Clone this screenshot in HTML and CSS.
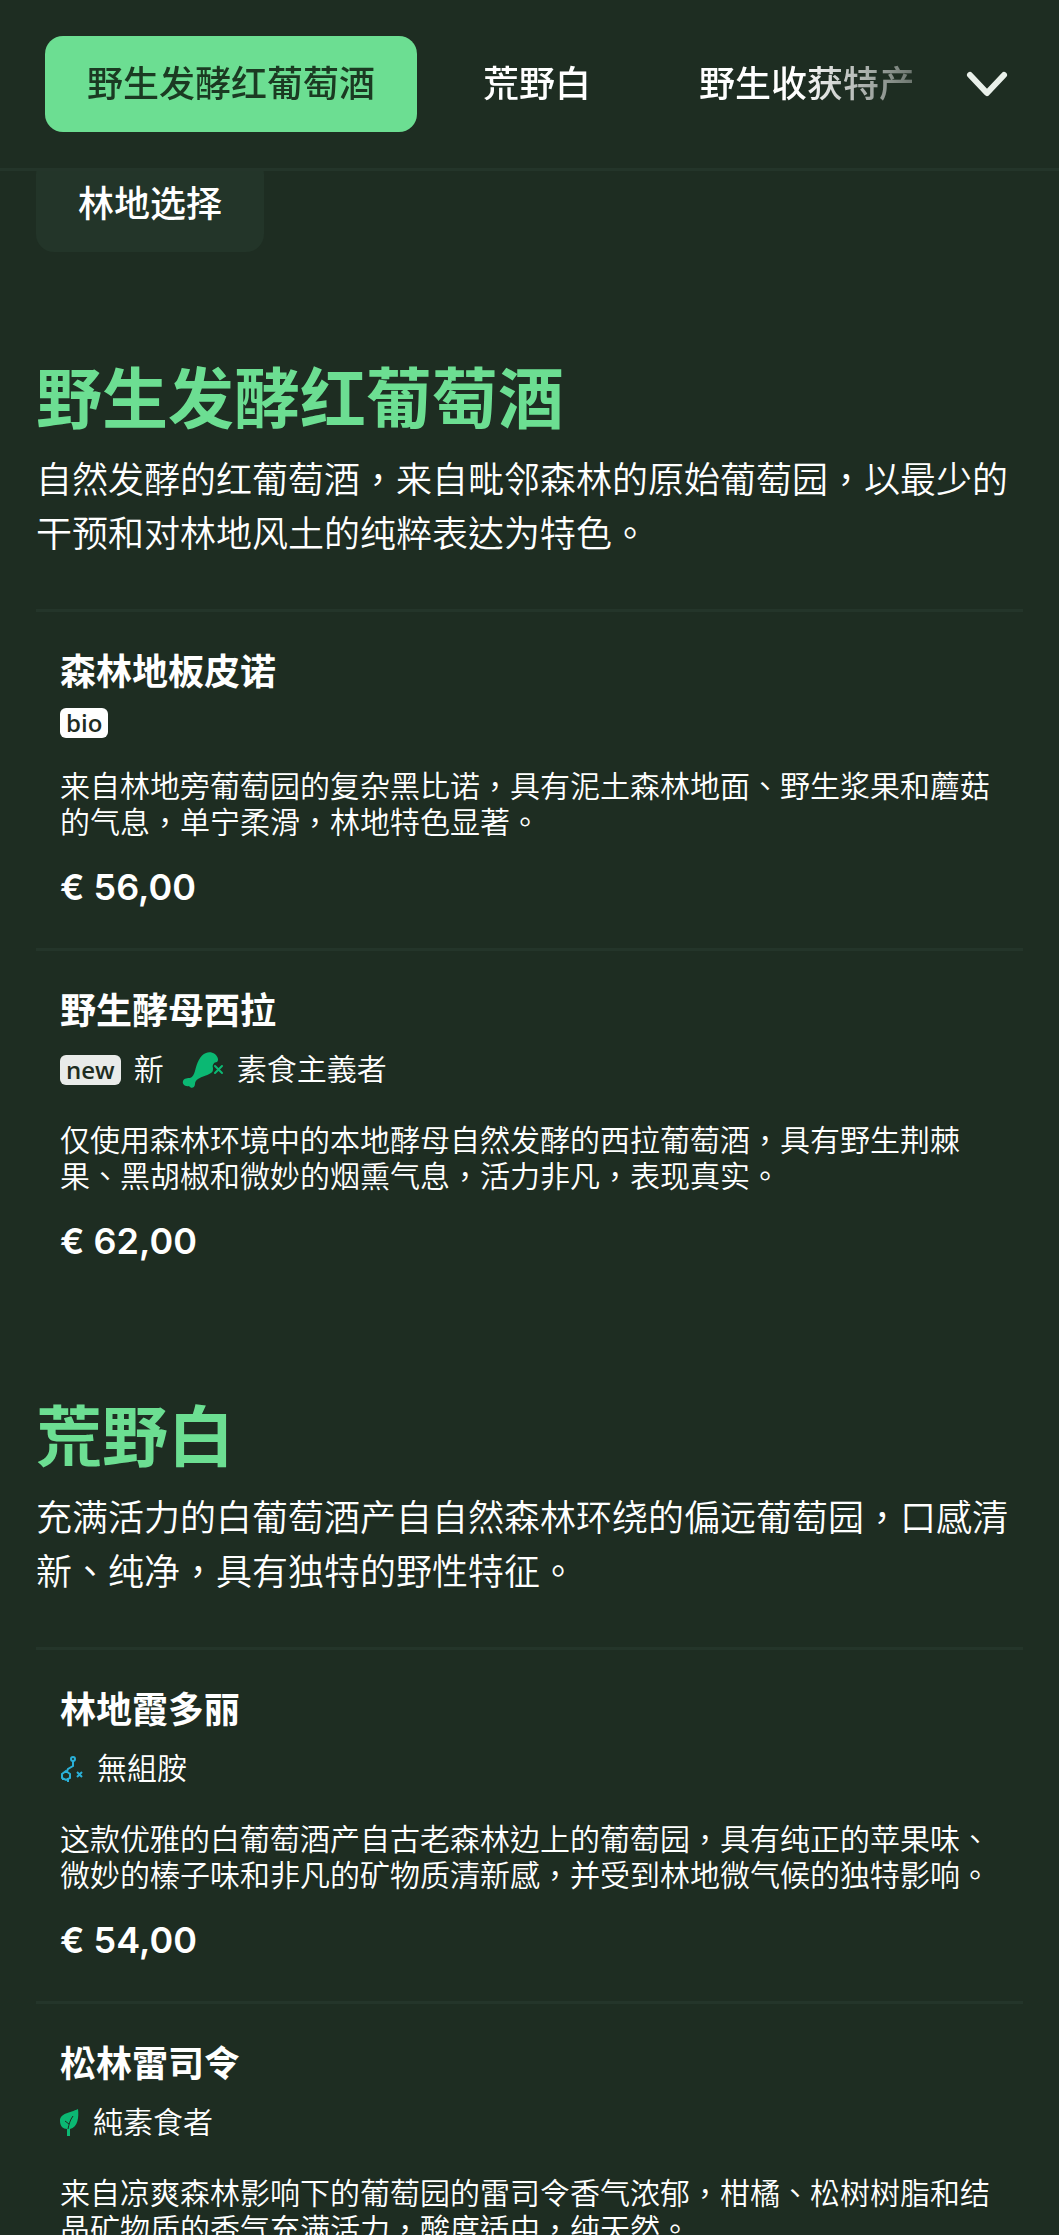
FILE: index.html
```html
<!DOCTYPE html>
<html lang="zh-Hant">
<head>
    <meta charset="UTF-8">
    <meta name="viewport" content="width=device-width, initial-scale=1.0">
    <title>野生发酵红葡萄酒</title>
    <link rel="stylesheet" href="styles.css">
</head>
<body>
    <header class="topbar">
        <nav class="tabs">
            <a class="tab active" href="#red">野生发酵红葡萄酒</a>
            <a class="tab" href="#white">荒野白</a>
            <a class="tab" href="#special">野生收获特产</a>
        </nav>
        <button class="toggle" type="button" aria-label="菜单">
            <svg width="42" height="26" viewBox="0 0 42 26" fill="none" stroke="#e9f0ea" stroke-width="6" stroke-linecap="round" stroke-linejoin="round">
                <path d="M4 4l17 18L38 4"/>
            </svg>
        </button>
    </header>

    <main class="menu">
        <a class="chip" href="#forest">林地选择</a>

        <section class="category" id="red">
            <h2 class="category-title">野生发酵红葡萄酒</h2>
            <p class="category-text">自然发酵的红葡萄酒，来自毗邻森林的原始葡萄园，以最少的干预和对林地风土的纯粹表达为特色。</p>

            <article class="item">
                <h3 class="item-title">森林地板皮诺</h3>
                <div class="labels">
                    <span class="badge bio">bio</span>
                </div>
                <p class="item-text">来自林地旁葡萄园的复杂黑比诺，具有泥土森林地面、野生浆果和蘑菇的气息，单宁柔滑，林地特色显著。</p>
                <p class="price">€ 56,00</p>
            </article>

            <article class="item">
                <h3 class="item-title">野生酵母西拉</h3>
                <div class="labels">
                    <span class="label"><span class="badge">new</span>新</span>
                    <span class="label">
                        <svg width="42" height="38" viewBox="0 0 42 38">
                            <path fill="#0bb873" d="M24 2C29 0 35 3 36 8c0 1 0 2-1 3-3 0-5 3-4 6 0 2 0 4-2 5-4 3-9 3-13 6-2 1-3 3-3 5 0 4-4 5-6 2-4 1-7-2-6-5 1-3 5-3 7-3 3-1 4-4 5-7 2-8 5-16 11-18z"/>
                            <path stroke="#0bb873" stroke-width="2" stroke-linecap="round" d="M33 15l7 7M40 15l-7 7"/>
                        </svg>
                        素食主義者
                    </span>
                </div>
                <p class="item-text">仅使用森林环境中的本地酵母自然发酵的西拉葡萄酒，具有野生荆棘果、黑胡椒和微妙的烟熏气息，活力非凡，表现真实。</p>
                <p class="price">€ 62,00</p>
            </article>
        </section>

        <section class="category" id="white">
            <h2 class="category-title">荒野白</h2>
            <p class="category-text">充满活力的白葡萄酒产自自然森林环绕的偏远葡萄园，口感清新、纯净，具有独特的野性特征。</p>

            <article class="item">
                <h3 class="item-title">林地霞多丽</h3>
                <div class="labels">
                    <span class="label">
                        <svg width="24" height="26" viewBox="0 0 24 26" fill="none" stroke="#2ab0d8" stroke-width="2">
                            <circle cx="13" cy="3" r="2"/>
                            <path d="M13 5v5l-5 3-1 2"/>
                            <path d="M6 15l4 3v4l-4 2-4-2v-4z"/>
                            <path d="M3 22v2M8 22v4"/>
                            <path d="M17 16l5 5M22 16l-5 5"/>
                        </svg>
                        無組胺
                    </span>
                </div>
                <p class="item-text">这款优雅的白葡萄酒产自古老森林边上的葡萄园，具有纯正的苹果味、微妙的榛子味和非凡的矿物质清新感，并受到林地微气候的独特影响。</p>
                <p class="price">€ 54,00</p>
            </article>

            <article class="item">
                <h3 class="item-title">松林雷司令</h3>
                <div class="labels">
                    <span class="label">
                        <svg width="20" height="28" viewBox="0 0 20 28">
                            <path fill="#0bb873" d="M18 0c1 8 0 18-8 20V27H7v-7C3 20 0 17 0 12 0 4 10 4 18 0z"/>
                            <path stroke="#1f2d22" stroke-width="1" fill="none" d="M13 7C10 11 9 15 8 20M9 15l-4-3"/>
                        </svg>
                        純素食者
                    </span>
                </div>
                <p class="item-text">来自凉爽森林影响下的葡萄园的雷司令香气浓郁，柑橘、松树树脂和结晶矿物质的香气充满活力，酸度适中，纯天然。</p>
            </article>
        </section>
    </main>
</body>
</html>
```
FILE: styles.css
```css
* {
    box-sizing: border-box;
}

body {
    margin: 0;
    background-color: #1e2d22;
    color: #fff;
    font-family: Inter, "Noto Sans CJK TC", sans-serif;
    font-size: 36px;
    font-weight: 350;
    line-height: 54px;
}

h2, h3, p {
    margin: 0;
}

a {
    color: inherit;
    text-decoration: none;
}

.topbar {
    position: fixed;
    top: 0;
    left: 0;
    right: 0;
    z-index: 1;
    display: flex;
    align-items: center;
    padding: 36px 51px 36px 45px;
    background-color: #1e2d22;
    border-bottom: 3px solid #24352a;
}

.tabs {
    flex: 1;
    display: flex;
    gap: 24px;
    overflow: hidden;
    -webkit-mask-image: linear-gradient(to right, #000 calc(100% - 110px), transparent calc(100% + 60px));
    mask-image: linear-gradient(to right, #000 calc(100% - 110px), transparent calc(100% + 60px));
}

.tab,
.chip {
    flex-shrink: 0;
    padding: 21px 42px;
    border-radius: 18px;
    font-weight: 500;
}

.tab.active {
    background-color: #6cde92;
    color: #1b3a22;
}

.toggle {
    display: flex;
    justify-content: flex-end;
    width: 96px;
    padding: 0;
    border: none;
    background: none;
    cursor: pointer;
}

.menu {
    padding: 156px 36px 36px;
}

.chip {
    display: inline-block;
    background-color: #233529;
    margin-bottom: 12px;
    vertical-align: top;
}

.category {
    padding-top: 96px;
}

.category-title {
    margin-bottom: 15px;
    color: #6cde92;
    font-size: 66px;
    font-weight: 600;
    line-height: 78px;
}

.category-text {
    margin-bottom: 48px;
}

.item {
    padding: 33px 24px;
    border-top: 3px solid #24352a;
}

.item-title {
    margin-bottom: 9px;
    font-size: 36px;
    font-weight: 600;
}

.labels {
    display: flex;
    align-items: center;
    gap: 18px;
    margin-bottom: 30px;
    font-size: 30px;
    line-height: 45px;
}

.label {
    display: flex;
    align-items: center;
    gap: 13px;
}

.badge {
    padding: 0 6px;
    border-radius: 6px;
    background-color: #e9ebe9;
    color: #1e2d22;
    font-family: "Open Sans", sans-serif;
    font-size: 24px;
    font-weight: 600;
    line-height: 30px;
}

.badge.bio {
    background-color: #fff;
}

.item-text {
    margin-bottom: 20px;
    font-size: 30px;
    line-height: 36px;
}

.price {
    margin-bottom: 1px;
    font-weight: 600;
}
```
